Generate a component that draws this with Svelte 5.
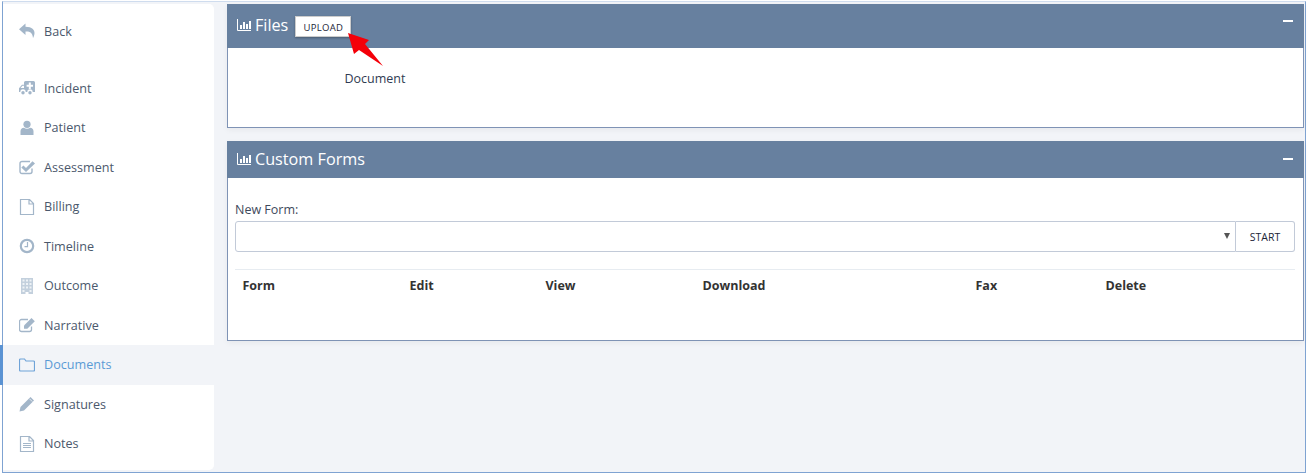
<script>
  const items = [
    { label: 'Incident', icon: 'ambulance' },
    { label: 'Patient', icon: 'user' },
    { label: 'Assessment', icon: 'check' },
    { label: 'Billing', icon: 'file' },
    { label: 'Timeline', icon: 'clock' },
    { label: 'Outcome', icon: 'building' },
    { label: 'Narrative', icon: 'edit' },
    { label: 'Documents', icon: 'folder', active: true },
    { label: 'Signatures', icon: 'pencil' },
    { label: 'Notes', icon: 'notes' }
  ];
  const columns = [
    { label: 'Form', width: 167 },
    { label: 'Edit', width: 136 },
    { label: 'View', width: 157 },
    { label: 'Download', width: 273 },
    { label: 'Fax', width: 130 },
    { label: 'Delete', width: 100 }
  ];
</script>

{#snippet chart()}
  <svg class="chart" viewBox="0 0 14 12" width="14" height="12">
    <path d="M0.5 0v11.500H14" fill="none" stroke="currentColor" />
    <path d="M3 6h2v4H3zM6 3h2v7H6zM9 5h2v5H9zM12 2h2v8h-2z" fill="currentColor" />
  </svg>
{/snippet}

{#snippet icon(name)}
  <svg class="icon" viewBox="0 0 16 16" width="16" height="16">
    {#if name === 'back'}
      <path d="M6.500 .5 0 6.300 6.500 12V8.500c4-.3 7 .8 7.500 6.500 2.500-4.500 3-11-7.500-11.300z" fill="currentColor" />
    {:else if name === 'ambulance'}
      <path d="M6.500 1h8a1.500 1.500 0 0 1 1.500 1.500V12h-2.300a2.700 2.700 0 0 0-5.400 0H6.700a2.700 2.700 0 0 0-5.400 0H0V8.200L3 4.800h2V2.500A1.500 1.500 0 0 1 6.500 1z" fill="currentColor" />
      <path d="M9.800 2.600h2v2.200H14v2h-2.200V9h-2V6.800H7.600v-2h2.200z" fill="#fff" />
      <path d="M1.500 8 3.500 5.800H5V8z" fill="#fff" />
      <circle cx="4" cy="12.700" r="1.700" fill="currentColor" />
      <circle cx="11" cy="12.700" r="1.700" fill="currentColor" />
    {:else if name === 'user'}
      <circle cx="8" cy="4.300" r="3.600" fill="currentColor" />
      <path d="M1.500 15v-3.800C1.500 9 3 7.700 4.800 7.700c2 1.500 4.400 1.500 6.400 0 1.800 0 3.300 1.300 3.300 3.500V15z" fill="currentColor" />
    {:else if name === 'check'}
      <path d="M13 9.500v3a2 2 0 0 1-2 2H3a2 2 0 0 1-2-2v-8a2 2 0 0 1 2-2h8" fill="none" stroke="currentColor" stroke-width="1.400" />
      <path d="M4.500 6.500 7 9 13.500 2.200 16 4.500 7 13 2.300 8.500z" fill="currentColor" />
    {:else if name === 'file'}
      <path d="M1.500 .5h9l4 4v11h-13zM10 .5v4.500h4.500" fill="none" stroke="currentColor" stroke-width="1.200" />
    {:else if name === 'clock'}
      <circle cx="8" cy="8" r="6.200" fill="none" stroke="currentColor" stroke-width="2.200" />
      <path d="M8.500 4v4.700H5.500" fill="none" stroke="currentColor" stroke-width="1.200" />
    {:else if name === 'building'}
      <path d="M2 0h12v16H9.500v-2h-3v2H2z" fill="#c3d0dd" />
      <path d="M3.500 1.500h2v2h-2zM7 1.500h2v2H7zM10.500 1.500h2v2h-2zM3.500 5h2v2h-2zM7 5h2v2H7zM10.500 5h2v2h-2zM3.500 8.500h2v2h-2zM7 8.500h2v2H7zM10.500 8.500h2v2h-2zM3.500 12h2v2h-2zM10.500 12h2v2h-2z" fill="#eef2f6" />
    {:else if name === 'edit'}
      <path d="M12.500 9.500v3a2 2 0 0 1-2 2H2.500a2 2 0 0 1-2-2v-8a2 2 0 0 1 2-2H9" fill="none" stroke="currentColor" stroke-width="1.300" />
      <path d="M5 8.500 12.500 1l3.300 3.300L8.300 11.800H5z" fill="currentColor" />
    {:else if name === 'folder'}
      <path d="M1.500 2h4l1.500 2h7.500a1 1 0 0 1 1 1v8a1 1 0 0 1-1 1h-13a1 1 0 0 1-1-1V3a1 1 0 0 1 1-1z" fill="none" stroke="currentColor" stroke-width="1.200" />
    {:else if name === 'pencil'}
      <path d="M0.500 15.500 1.500 11 11.500 1l3.500 3.500-10 10z" fill="currentColor" />
      <path d="M10.500 2.800 13.300 5.600" stroke="#fff" stroke-width=".7" />
    {:else}
      <path d="M1.500 .5h9l4 4v11h-13zM10 .5v4.500h4.500" fill="none" stroke="currentColor" stroke-width="1.200" />
      <path d="M4 7.500h8M4 9.500h8M4 11.500h8" stroke="currentColor" stroke-width="1" />
    {/if}
  </svg>
{/snippet}

<div class="frame">
  <nav class="sidebar">
    <a class="item back">{@render icon('back')}<span>Back</span></a>
    <div class="list">
      {#each items as item}
        <a class="item" class:active={item.active}>{@render icon(item.icon)}<span>{item.label}</span></a>
      {/each}
    </div>
  </nav>

  <main class="content">
    <section class="panel files">
      <header>
        <h2>{@render chart()} Files</h2>
        <button class="upload">UPLOAD</button>
        <span class="collapse"></span>
      </header>
      <div class="body">
        <span class="doc">Document</span>
      </div>
      <svg class="arrow" viewBox="0 0 36 34" width="36" height="34">
        <path d="M0 0 21 7 17 11 35 33 11 17 6 21z" fill="#f40009" />
      </svg>
    </section>

    <section class="panel forms">
      <header>
        <h2>{@render chart()} Custom Forms</h2>
        <span class="collapse"></span>
      </header>
      <div class="body">
        <label for="new-form">New Form:</label>
        <div class="row">
          <div id="new-form" class="select"><span class="caret"></span></div>
          <button class="start">START</button>
        </div>
        <div class="thead">
          {#each columns as col}
            <span style:width="{col.width}px">{col.label}</span>
          {/each}
        </div>
      </div>
    </section>
  </main>
</div>

<style>
  :global(body) {
    background: #fff;
    font-family: "Open Sans", sans-serif;
    color: #3f4a5c;
  }
  .frame {
    display: flex;
    box-sizing: border-box;
    width: 1304px;
    height: 472px;
    margin: 1px 0 0 2px;
    background: #f2f4f8;
    border: 1px solid #7fa3d2;
    border-top-color: #cfdcee;
    padding-top: 2px;
  }
  .sidebar {
    width: 211px;
    height: 466px;
    background: #fff;
    border-radius: 0 5px 5px 0;
    flex: none;
  }
  .item {
    display: flex;
    align-items: center;
    gap: 9px;
    height: 39.500px;
    padding-left: 16px;
    font-size: 12.600px;
    color: #4b586c;
  }
  .item.back {
    height: 54px;
    margin-bottom: 10.500px;
  }
  .item .icon {
    color: #a3b6c9;
    flex: none;
  }
  .item.active {
    background: #f2f4f8;
    color: #5b9bd5;
    box-shadow: -3px 0 0 #5b93d3;
  }
  .item.active .icon {
    color: #6fa3d8;
  }
  .content {
    flex: 1;
    padding: 0 1px 0 13px;
    min-width: 0;
  }
  .panel {
    position: relative;
    background: #fff;
    border: 1px solid #7f93b5;
    border-top: 0;
    margin-bottom: 13px;
    box-shadow: 0 2px 6px rgba(0, 0, 0, .05);
  }
  .panel header {
    display: flex;
    align-items: center;
    background: #67809f;
    color: #fff;
    padding: 0 11px 0 10px;
    margin: 0 -1px;
  }
  .files header {
    height: 44px;
  }
  .forms header {
    height: 37px;
  }
  h2 {
    margin: -2px 0 0;
    font-size: 16.200px;
    font-weight: 400;
    display: flex;
    align-items: center;
    gap: 4px;
  }
  .chart {
    color: #fff;
  }
  .upload {
    margin-left: 7px;
    margin-top: 1px;
    height: 21px;
    width: 56px;
    padding: 1px 0 0;
    background: #fff;
    border: 1px solid #ccc;
    box-shadow: 0 1px 2px rgba(0, 0, 0, .3);
    font: 400 9.500px "Open Sans", sans-serif;
    letter-spacing: .3px;
    color: #1c2638;
  }
  .collapse {
    align-self: flex-start;
    margin: 16px 0 0 auto;
    width: 10px;
    height: 2px;
    background: #fff;
  }
  .forms .collapse {
    margin-top: 17px;
  }
  .files .body {
    height: 79px;
    position: relative;
  }
  .doc {
    position: absolute;
    left: 116.500px;
    top: 22px;
    font-size: 12.500px;
    color: #2f3b52;
  }
  .arrow {
    position: absolute;
    left: 120px;
    top: 29px;
  }
  .forms .body {
    box-sizing: border-box;
    height: 162px;
    padding: 23px 8px 0 7px;
  }
  label {
    display: block;
    font-size: 12.500px;
    line-height: 17px;
    margin-bottom: 3px;
    color: #3f4a5c;
  }
  .row {
    display: flex;
    height: 31px;
  }
  .select {
    position: relative;
    flex: 1;
    border: 1px solid #c2cad8;
    border-radius: 3px 0 0 3px;
  }
  .caret {
    position: absolute;
    right: 5px;
    top: 11px;
    border: 3.500px solid transparent;
    border-top: 6px solid #555;
    border-bottom: 0;
  }
  .start {
    width: 59px;
    padding: 0;
    background: #fff;
    border: 1px solid #c2cad8;
    border-left: 0;
    border-radius: 0 3px 3px 0;
    font: 400 10.500px "Open Sans", sans-serif;
    color: #1c2638;
  }
  .thead {
    display: flex;
    margin-top: 17px;
    padding: 7px 0 0 7.500px;
    border-top: 1px solid #e7ecf1;
    font-size: 12.500px;
    font-weight: 700;
    color: #333;
  }
</style>
